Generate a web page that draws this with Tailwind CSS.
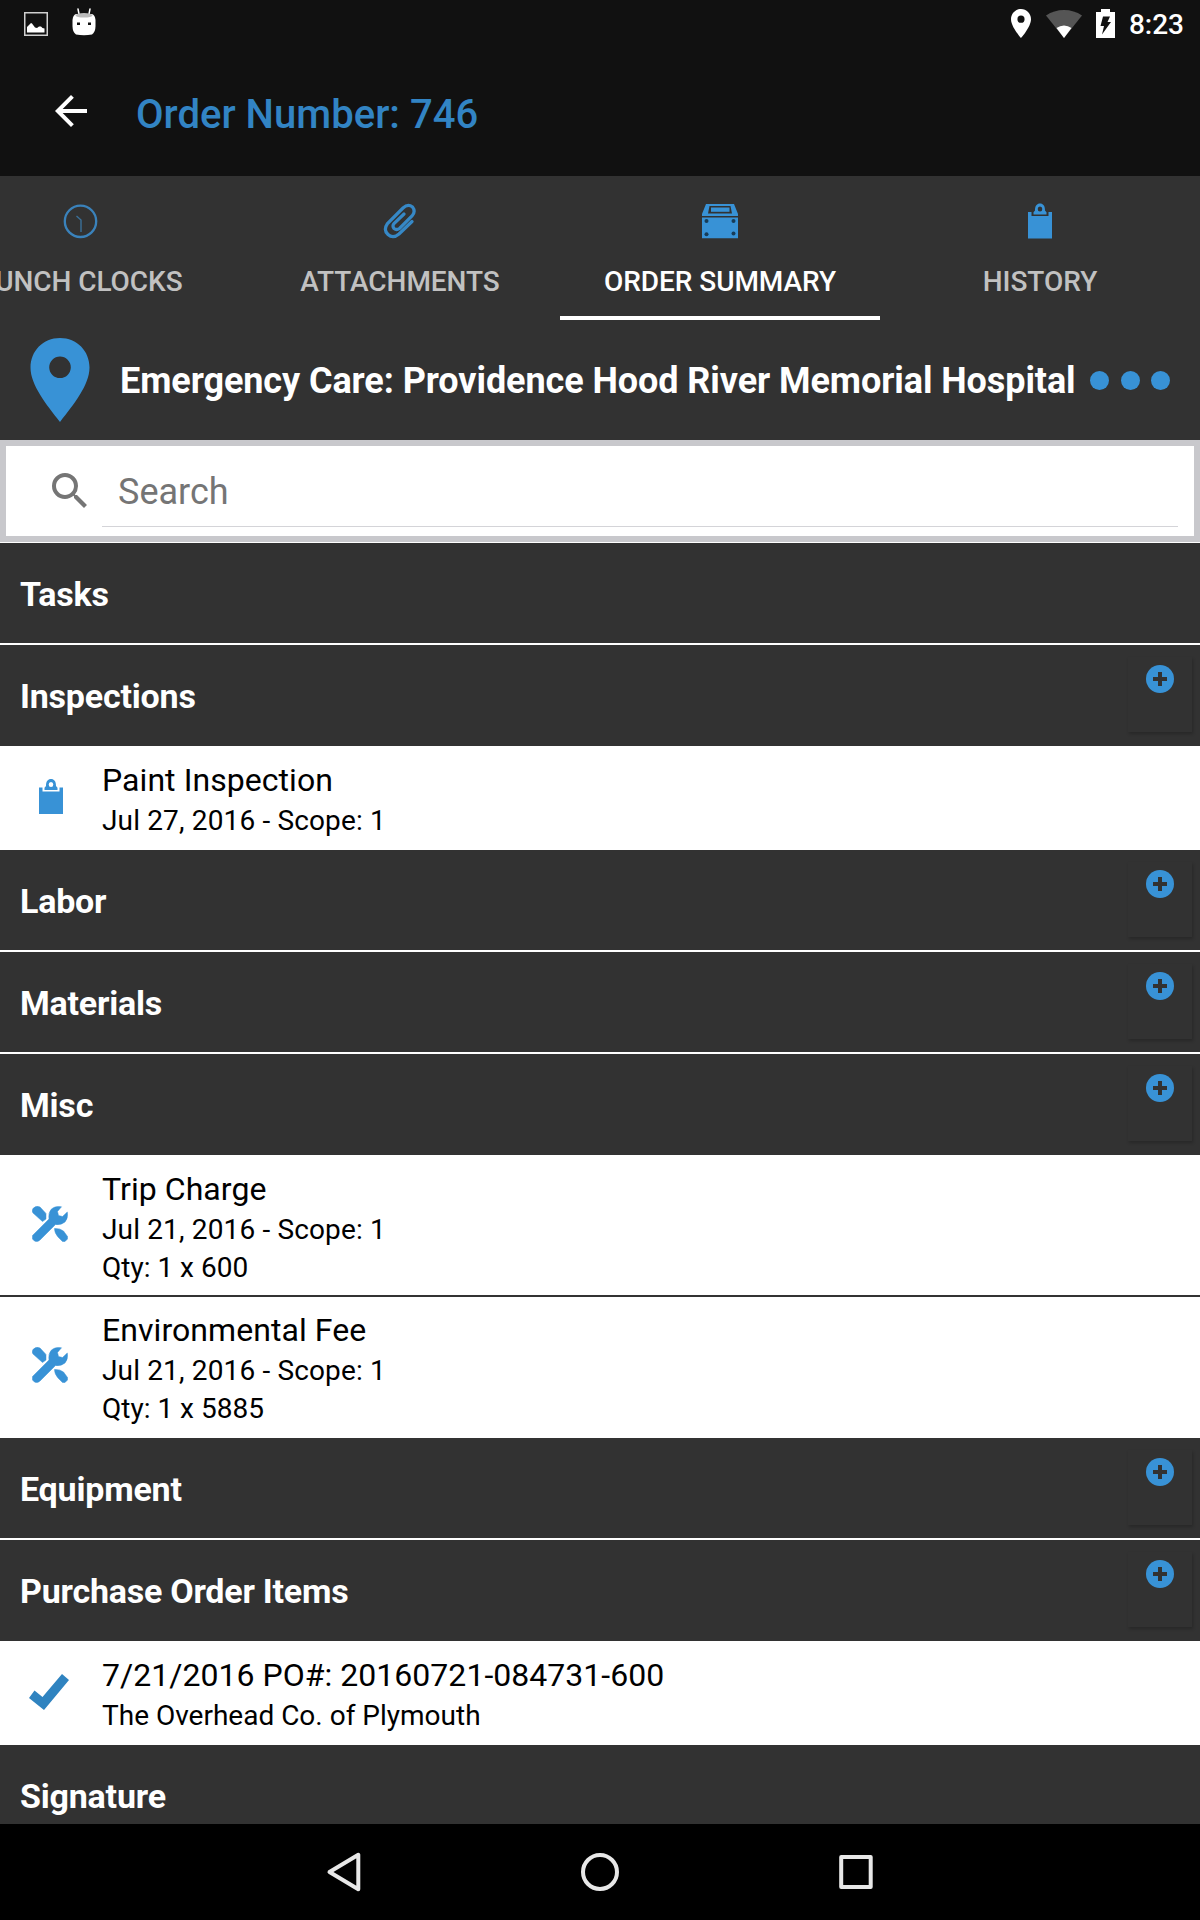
<!DOCTYPE html>
<html lang="en">
<head>
<meta charset="utf-8">
<title>Order Number: 746</title>
<script src="https://cdn.jsdelivr.net/npm/@tailwindcss/browser@4"></script>
</head>
<body class="bg-black font-['Roboto','Liberation_Sans',sans-serif]">
<svg class="hidden">
  <symbol id="plus" viewBox="0 0 28 28"><circle cx="14" cy="14" r="14" fill="#3892d6"/><path d="M12 7h4v5h5v4h-5v5h-4v-5H7v-4h5z" fill="#323232"/></symbol>
  <symbol id="clipboard" viewBox="0 0 24 35"><path fill="#3892d6" d="M0 8.500h3.500v4h17v-4H24V35H0z"/><path fill="#3892d6" fill-rule="evenodd" d="M5.500 11V8.800L7 7C7 2 9 0 12 0s5 2 5 7l1.500 1.800V11zM12 3a2.300 2.500 0 1 0 0 5 2.300 2.500 0 0 0 0-5z"/></symbol>
  <symbol id="tools" viewBox="0 0 36 36">
    <g fill="#3892d6" stroke="#3892d6" stroke-width=".5">
      <path d="M1 2.500Q4-1 8 1L14 7.500V13L10.500 15.500 1 7Q-.500 5 1 2.500z"/>
      <path d="M22.500 22.500Q28 22 31.500 25L35.500 30.500V33L33 35.500H30.500L26 31Q22.500 27 22.500 22.500z"/>
      <path d="M29.500.800L25.500 5.500 26.500 9.500 30.500 10.500 35.300 6Q36.500 12 33 16 29 19.500 23.500 18.500L8 34Q5.500 36.500 2.500 35L.500 33V29.500L17 13Q16 7 19 3.500 23-.500 29.500.800z"/>
    </g>
  </symbol>
</svg>
<div class="flex h-[1920px] w-[1200px] flex-col overflow-hidden">
  <!-- Status bar -->
  <div class="flex h-12 shrink-0 items-start bg-[#111] pr-[16px] pl-6">
    <svg class="mt-3 h-6 w-6" viewBox="0 0 24 24"><rect x=".75" y=".75" width="22.500" height="22.500" fill="none" stroke="#d0d0d0" stroke-width="1.500"/><path fill="#fff" d="M3 20.500V15l4-4 1 .500 3 4 2 .500 2-1.500h2l1.500 1.500 2 .500v4z"/></svg>
    <svg class="mt-2 ml-6 h-7 w-6" viewBox="0 0 24 28"><path d="M6 1l1 5M18 1l-1 5" stroke="#fff" stroke-width="1.500" stroke-linecap="round"/><path fill="#fff" d="M4 6h16q3 1 3.500 6v6q0 6-3.500 8.500-8 1.500-16 0Q.500 24 .500 18v-6Q1 7 4 6z"/><ellipse cx="12" cy="7.300" rx="8.500" ry="2.300" fill="#bbb"/><path fill="#111" d="M5 14.500h3v2.500H5zM16 14.500h3v2.500h-3z"/></svg>
    <svg class="mt-[9px] ml-auto h-[29px] w-5" viewBox="5 2 14 20" preserveAspectRatio="none"><path fill="#fff" d="M12 2C8.130 2 5 5.130 5 9c0 5.250 7 13 7 13s7-7.750 7-13c0-3.870-3.130-7-7-7zm0 9.500a2.500 2.500 0 1 1 0-5 2.500 2.500 0 0 1 0 5z"/></svg>
    <svg class="mt-[9px] ml-[15px] h-[29px] w-9" viewBox="0 0 36 29"><path fill="#555" d="M18 29L0 6.500Q8 1 18 1t18 5.500z"/><path fill="#fff" d="M18 29l-7.500-10Q14 16.500 18 16.500t7.500 2.500z"/></svg>
    <svg class="mt-[9px] ml-[14px] h-[29px] w-[19px]" viewBox="0 0 19 29"><path fill="#fff" d="M5 0h9v3h5v26H0V3h5z"/><path fill="#111" d="M7 7.500h7L11.500 13H15L6 25.500 8 17H4.500z"/></svg>
    <span class="mt-px ml-[14px] text-[28px] leading-[48px] font-medium text-white">8:23</span>
  </div>
  <!-- App bar -->
  <div class="flex h-32 shrink-0 items-center bg-[#111] pl-[47px]">
    <svg class="-mt-0.5 h-12 w-12" viewBox="0 0 24 24"><path fill="#fff" d="M20 11H7.830l5.590-5.590L12 4l-8 8 8 8 1.410-1.410L7.830 13H20z"/></svg>
    <h1 class="mt-[5px] ml-[41px] text-[40px] font-medium tracking-[0.04px] text-[#3284c4]">Order Number: 746</h1>
  </div>
  <!-- Tabs -->
  <div class="-ml-20 flex h-36 w-[1280px] shrink-0 bg-[#323232] text-[28px] font-medium tracking-[-0.05px] whitespace-nowrap text-[#c1c1c1]">
    <div class="flex w-80 flex-col items-center pt-[27px]">
      <svg class="h-9 w-9" viewBox="0 0 36 36"><circle cx="18.500" cy="18.300" r="15.700" fill="none" stroke="#3a82bb" stroke-width="2.300"/><path d="M14.500 13l4.500 4v12" fill="none" stroke="#3a7099" stroke-width="1.400"/></svg>
      <span class="mt-[22px] leading-[42px]">PUNCH CLOCKS</span>
    </div>
    <div class="flex w-80 flex-col items-center pt-[27px]">
      <svg class="h-9 w-9" viewBox="0 0 36 36"><path d="M30 18.500L17 31Q11 36 6 31.500 1 27 5.500 20.500L21 5Q26 .500 30.500 4 34 8.500 30 13L17.500 25.500Q14.500 27.500 12 25.500 10 23 12 20.500L22 11" fill="none" stroke="#3688c6" stroke-width="3.200" stroke-linecap="round"/></svg>
      <span class="mt-[22px] leading-[42px]">ATTACHMENTS</span>
    </div>
    <div class="flex w-80 flex-col items-center border-b-4 border-white pt-[27px] text-white">
      <svg class="h-9 w-9" viewBox="0 0 36 36"><path fill="#3892d6" fill-rule="evenodd" d="M4 1h28l4 10v2H0v-2zM7.500 3L6 10.500h24L28.500 3z"/><path d="M9 4.500h18.500v4.300H9z" fill="#3892d6"/><path fill="#3892d6" d="M0 14.500h36V35.300H0z"/><g fill="#173c58"><circle cx="4.500" cy="18" r="2"/><circle cx="31.500" cy="18" r="2"/><circle cx="4.500" cy="31.300" r="2"/><circle cx="31.500" cy="30.500" r="2"/></g></svg>
      <span class="mt-[22px] leading-[42px]">ORDER SUMMARY</span>
    </div>
    <div class="flex w-80 flex-col items-center pt-[27px]">
      <svg class="h-9 w-6"><use href="#clipboard"/></svg>
      <span class="mt-[22px] leading-[42px]">HISTORY</span>
    </div>
  </div>
  <!-- Site -->
  <div class="flex h-[120px] shrink-0 items-center bg-[#323232] pl-[30px]">
    <svg class="h-[84px] w-[60px]" viewBox="0 0 60 84"><path fill="#3892d6" fill-rule="evenodd" d="M30 0C13 0 .500 13 .500 29.500.500 47 16 66 30 84 44 66 59.500 47 59.500 29.500 59.500 13 47 0 30 0zm0 18.500a10.800 10.800 0 1 1 0 21.600 10.800 10.800 0 0 1 0-21.600z"/></svg>
    <h2 class="mt-[2px] ml-[30px] w-[970px] text-[36px] font-bold tracking-[-0.08px] whitespace-nowrap text-white">Emergency Care: Providence Hood River Memorial Hospital</h2>
    <div class="flex gap-[11.5px]">
      <span class="h-[19px] w-[19px] rounded-full bg-[#3892d6]"></span>
      <span class="h-[19px] w-[19px] rounded-full bg-[#3892d6]"></span>
      <span class="h-[19px] w-[19px] rounded-full bg-[#3892d6]"></span>
    </div>
  </div>
  <!-- Search -->
  <div class="flex h-[102px] shrink-0 border-6 border-[#c8c8cc] bg-white pr-4 pl-10">
    <svg class="mt-[21px] h-12 w-12" viewBox="0 0 24 24"><path fill="#757575" d="M15.500 14h-.79l-.28-.27A6.471 6.471 0 0 0 16 9.500 6.500 6.500 0 1 0 9.500 16c1.610 0 3.090-.59 4.230-1.570l.27.28v.79l5 4.990L20.490 19l-4.990-5zm-6 0C7.010 14 5 11.990 5 9.500S7.010 5 9.500 5 14 7.010 14 9.500 11.990 14 9.500 14z"/></svg>
    <div class="ml-2 h-[81px] flex-1 border-b border-[#d4d4d8] pl-4 text-[36px] leading-[92px] text-[#757575]">Search</div>
  </div>
  <!-- Order sections -->
  <div class="flex min-h-0 flex-1 flex-col bg-white pt-px text-black">
    <div class="flex h-[100px] shrink-0 items-center bg-[#323232] pt-0.5 pl-5 text-[34px] font-bold tracking-[-0.22px] text-white">Tasks</div>

    <div class="mt-0.5 flex h-[101px] shrink-0 bg-[#323232] pr-2 pl-5 text-white">
      <span class="flex-1 text-[34px] leading-[102px] font-bold tracking-[-0.2px]">Inspections</span>
      <span class="mt-3 flex h-[75px] w-[64px] justify-center pt-2 shadow-[1px_2px_3px_rgba(0,0,0,0.22)]"><svg class="h-7 w-7"><use href="#plus"/></svg></span>
    </div>
    <div class="flex h-[104px] shrink-0 pl-[39px]">
      <svg class="mt-[33px] h-[35px] w-6"><use href="#clipboard"/></svg>
      <div class="pt-[14px] pl-[39px] text-[28px] leading-[38px]"><p class="mb-px text-[32px] leading-[41px] tracking-[0.06px]">Paint Inspection</p><p class="tracking-[0.15px]">Jul 27, 2016 - Scope: 1</p></div>
    </div>

    <div class="flex h-[100px] shrink-0 bg-[#323232] pr-2 pl-5 text-white">
      <span class="flex-1 text-[34px] leading-[102px] font-bold tracking-[-0.2px]">Labor</span>
      <span class="mt-3 flex h-[75px] w-[64px] justify-center pt-2 shadow-[1px_2px_3px_rgba(0,0,0,0.22)]"><svg class="h-7 w-7"><use href="#plus"/></svg></span>
    </div>
    <div class="mt-0.5 flex h-[100px] shrink-0 bg-[#323232] pr-2 pl-5 text-white">
      <span class="flex-1 text-[34px] leading-[102px] font-bold tracking-[-0.2px]">Materials</span>
      <span class="mt-3 flex h-[75px] w-[64px] justify-center pt-2 shadow-[1px_2px_3px_rgba(0,0,0,0.22)]"><svg class="h-7 w-7"><use href="#plus"/></svg></span>
    </div>
    <div class="mt-0.5 flex h-[101px] shrink-0 bg-[#323232] pr-2 pl-5 text-white">
      <span class="flex-1 text-[34px] leading-[102px] font-bold tracking-[-0.2px]">Misc</span>
      <span class="mt-3 flex h-[75px] w-[64px] justify-center pt-2 shadow-[1px_2px_3px_rgba(0,0,0,0.22)]"><svg class="h-7 w-7"><use href="#plus"/></svg></span>
    </div>
    <div class="flex h-[142px] shrink-0 border-b-2 border-[#323232] pl-8">
      <svg class="mt-[51px] h-9 w-9"><use href="#tools"/></svg>
      <div class="pt-[14px] pl-[34px] text-[28px] leading-[38px]"><p class="mb-px text-[32px] leading-[41px] tracking-[0.06px]">Trip Charge</p><p class="tracking-[0.15px]">Jul 21, 2016 - Scope: 1</p><p>Qty: 1 x 600</p></div>
    </div>
    <div class="flex h-[141px] shrink-0 pl-8">
      <svg class="mt-[50px] h-9 w-9"><use href="#tools"/></svg>
      <div class="pt-[13px] pl-[34px] text-[28px] leading-[38px]"><p class="mb-px text-[32px] leading-[41px] tracking-[0.06px]">Environmental Fee</p><p class="tracking-[0.15px]">Jul 21, 2016 - Scope: 1</p><p>Qty: 1 x 5885</p></div>
    </div>

    <div class="flex h-[100px] shrink-0 bg-[#323232] pr-2 pl-5 text-white">
      <span class="flex-1 text-[34px] leading-[102px] font-bold tracking-[-0.2px]">Equipment</span>
      <span class="mt-3 flex h-[75px] w-[64px] justify-center pt-2 shadow-[1px_2px_3px_rgba(0,0,0,0.22)]"><svg class="h-7 w-7"><use href="#plus"/></svg></span>
    </div>
    <div class="mt-0.5 flex h-[101px] shrink-0 bg-[#323232] pr-2 pl-5 text-white">
      <span class="flex-1 text-[34px] leading-[102px] font-bold tracking-[-0.23px]">Purchase Order Items</span>
      <span class="mt-3 flex h-[75px] w-[64px] justify-center pt-2 shadow-[1px_2px_3px_rgba(0,0,0,0.22)]"><svg class="h-7 w-7"><use href="#plus"/></svg></span>
    </div>
    <div class="flex h-[104px] shrink-0 pl-[29px]">
      <svg class="mt-[33px] h-9 w-10" viewBox="0 0 40 36"><path fill="#2f83c0" d="M0 24l5.500-7.500 8 6.500L33 0l7 6-25 30z"/></svg>
      <div class="pt-[14px] pl-[33px] text-[28px] leading-[38px]"><p class="mb-px text-[32px] leading-[41px] tracking-[0.03px]">7/21/2016 PO#: 20160721-084731-600</p><p>The Overhead Co. of Plymouth</p></div>
    </div>

    <div class="h-[79px] shrink-0 overflow-hidden bg-[#323232] pl-5 text-[34px] leading-[102px] font-bold tracking-[-0.2px] text-white">Signature</div>
  </div>
  <!-- Navigation bar -->
  <div class="flex h-24 shrink-0 items-center justify-center gap-[208px] bg-black">
    <svg class="h-12 w-12" viewBox="0 0 48 48" fill="none" stroke="#e8e8e8" stroke-width="4" stroke-linejoin="round"><path d="M38.300 6.800v34.400L9.500 24z"/></svg>
    <svg class="h-12 w-12" viewBox="0 0 48 48" fill="none" stroke="#e8e8e8" stroke-width="4"><circle cx="24" cy="24" r="17"/></svg>
    <svg class="h-12 w-12" viewBox="0 0 48 48" fill="none" stroke="#e8e8e8" stroke-width="4" stroke-linejoin="round"><rect x="9.200" y="9" width="29.500" height="30"/></svg>
  </div>
</div>
</body>
</html>
